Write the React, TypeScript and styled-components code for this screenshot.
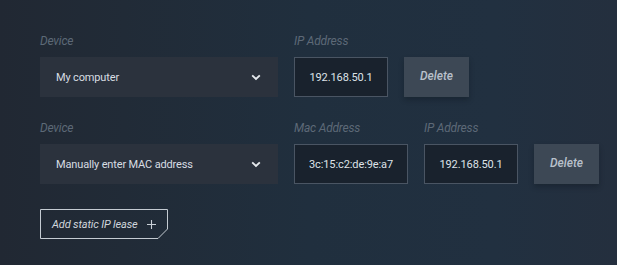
import styled, { createGlobalStyle } from "styled-components"

const GlobalStyle = createGlobalStyle`
  html, body {
    margin: 0;
    height: 100%;
  }
  body {
    background: linear-gradient(90deg, #212833 0%, #212b37 20%, #202f3e 50%, #213040 80%, #242f3e 100%);
    font-family: Roboto, sans-serif;
    color: #d5dbe2;
  }
`

const StyledPage = styled.main`
  padding: 34px 0 0 40px;
  display: flex;
  flex-direction: column;
  align-items: flex-start;
`
const StyledLease = styled.section`
  display: flex;
  align-items: flex-end;
  gap: 16px;
  margin-bottom: 24px;
`
const StyledField = styled.label`
  display: flex;
  flex-direction: column;
  gap: 8px;
`
const StyledLabel = styled.span`
  font-style: italic;
  font-size: 12px;
  line-height: 15px;
  color: #5d6977;
  letter-spacing: -0.2px;
`
const StyledSelect = styled.div`
  width: 238px;
  height: 40px;
  box-sizing: border-box;
  padding: 0 17px 0 16px;
  background: #2b323d;
  display: flex;
  align-items: center;
  justify-content: space-between;
  font-size: 11px;
  letter-spacing: -0.15px;
  color: #d8dde3;
`
const StyledInput = styled.div<{ $width: number }>`
  width: ${p => p.$width}px;
  height: 40px;
  box-sizing: border-box;
  border: 1px solid #4a5563;
  background: #19222d;
  display: flex;
  align-items: center;
  justify-content: center;
  font-size: 11px;
  letter-spacing: -0.1px;
  color: #dde2e8;
`
const StyledDelete = styled.button`
  width: 65px;
  height: 40px;
  border: none;
  background: #3d4855;
  color: #b9c1cb;
  font-family: Roboto, sans-serif;
  font-style: italic;
  font-weight: 500;
  font-size: 12px;
  box-shadow: 0 3px 5px rgba(10, 15, 22, 0.3);
  padding: 0 0 2px;
`
const StyledAdd = styled.button`
  position: relative;
  margin-top: 1px;
  width: 128px;
  height: 30px;
  border: none;
  background: transparent;
  padding: 0 0 0 12px;
  display: flex;
  align-items: center;
  gap: 9px;
  font-family: Roboto, sans-serif;
  font-style: italic;
  font-size: 11px;
  letter-spacing: -0.15px;
  color: #d0d6dd;

  > svg.outline {
    position: absolute;
    inset: 0;
  }
`

function Chevron() {
  return (
    <svg width="10" height="7" viewBox="0 0 10 7">
      <path d="M1.2 1.4 L5 5 L8.8 1.4" fill="none" stroke="#e6eaee" strokeWidth="1.9" />
    </svg>
  )
}

function Plus() {
  return (
    <svg width="9" height="9" viewBox="0 0 9 9">
      <path d="M4.5 0 V9 M0 4.5 H9" stroke="#c9d0d7" strokeWidth="1.1" />
    </svg>
  )
}

interface LeaseProps {
  device: string
  mac?: string
  ip: string
}

function Lease({ device, mac, ip }: LeaseProps) {
  return (
    <StyledLease>
      <StyledField>
        <StyledLabel>Device</StyledLabel>
        <StyledSelect>
          <span>{device}</span>
          <Chevron />
        </StyledSelect>
      </StyledField>
      {mac && (
        <StyledField>
          <StyledLabel>Mac Address</StyledLabel>
          <StyledInput $width={114}>{mac}</StyledInput>
        </StyledField>
      )}
      <StyledField>
        <StyledLabel>IP Address</StyledLabel>
        <StyledInput $width={94}>{ip}</StyledInput>
      </StyledField>
      <StyledDelete>Delete</StyledDelete>
    </StyledLease>
  )
}

export default function App() {
  return (
    <>
      <GlobalStyle />
      <StyledPage>
        <Lease device="My computer" ip="192.168.50.1" />
        <Lease device="Manually enter MAC address" mac="3c:15:c2:de:9e:a7" ip="192.168.50.1" />
        <StyledAdd>
          <svg className="outline" width="128" height="30" viewBox="0 0 128 30">
            <path d="M0.5 0.5 H127.5 V20 L118 29.5 H0.5 Z" fill="none" stroke="#c4cbd2" strokeWidth="1" />
          </svg>
          <span>Add static IP lease</span>
          <Plus />
        </StyledAdd>
      </StyledPage>
    </>
  )
}
